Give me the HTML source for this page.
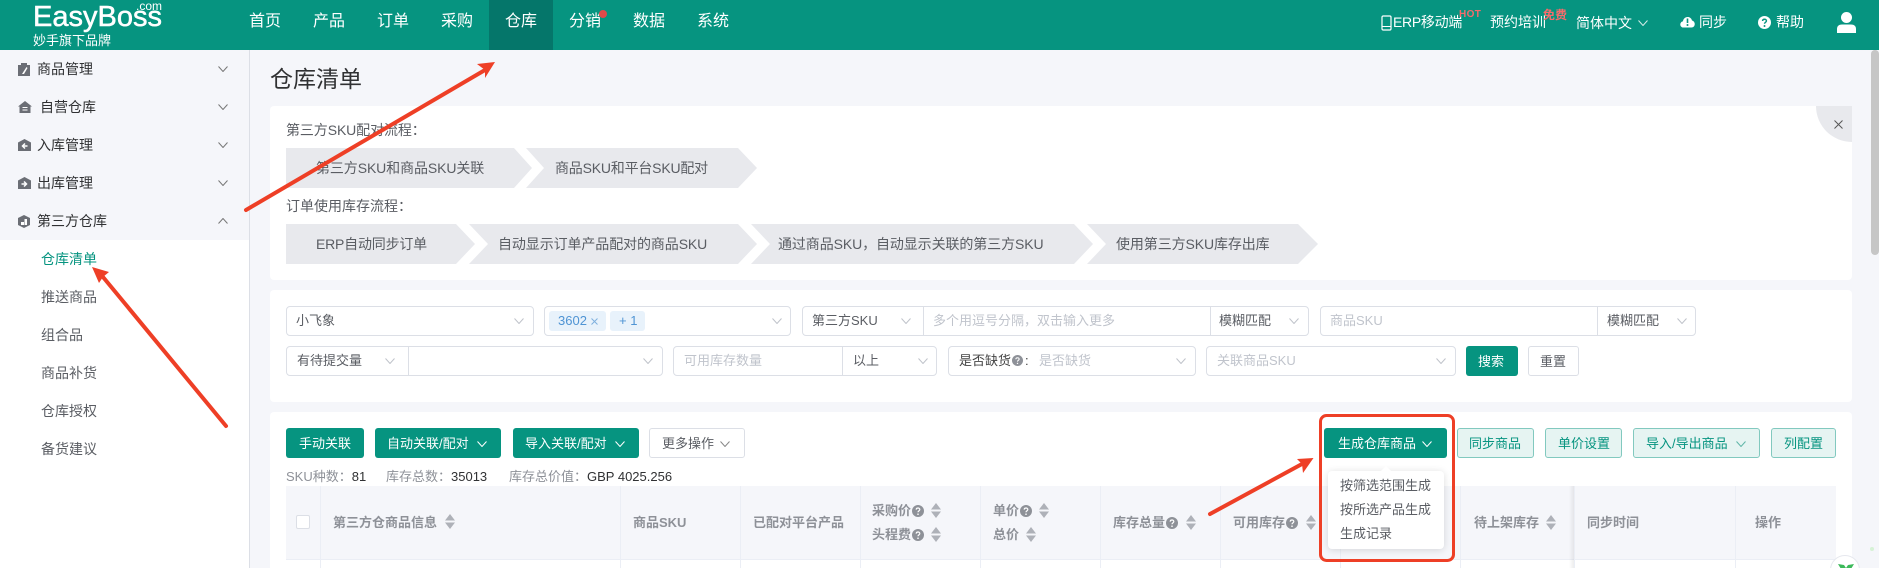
<!DOCTYPE html>
<html lang="zh-CN">
<head>
<meta charset="utf-8">
<title>仓库清单</title>
<style>
html,body{margin:0;padding:0;width:1879px;height:568px;overflow:hidden;background:#f5f6fa}
body{position:relative;font-family:"Liberation Sans","Noto Sans CJK SC",sans-serif;font-size:14px;color:#606266}
.a,.t,.b{position:absolute;box-sizing:border-box}
.t{white-space:nowrap;line-height:20px;height:20px}
.w{color:#fff}
.m{font-size:13px}
.card{background:#fff;border-radius:4px}
.box{border:1px solid #dcdfe6;border-radius:4px;background:#fff;height:30px}
.ph{color:#c0c4cc;font-size:13px}
.b{height:30px;border-radius:3px;top:428px}
.p{background:#069480}
.l{background:#e6f4f2;border:1px solid #82c9bf}
.g{color:#069480}
.h{font-weight:bold;font-size:13px;color:#8e9198}
.f{color:#5a5d63}
.s{font-size:13px;color:#8e9198}
.d{color:#303133}
svg{position:absolute;overflow:visible}
</style>
</head>
<body>
<svg width="0" height="0" style="position:absolute">
<defs>
<symbol id="chev" viewBox="0 0 10 6"><path d="M.5.5 5 5.5 9.5.5" fill="none" stroke="currentColor" stroke-width="1"/></symbol>
<symbol id="sort" viewBox="0 0 10 15"><path d="M5 0 10 6.500H0zM5 15 0 8.500h10z" fill="#aeb1b8"/></symbol>
<symbol id="help" viewBox="0 0 12 12"><circle cx="6" cy="6" r="6" fill="#8e9198"/><path d="M4.200 4.600C4.300 2.400 7.900 2.500 7.800 4.600 7.700 5.900 6 5.800 6 7.200" fill="none" stroke="#fff" stroke-width="1.200"/><circle cx="6" cy="9.200" r=".8" fill="#fff"/></symbol>
</defs>
</svg>

<!-- header -->
<div class="a" style="left:0;top:0;width:1879px;height:50px;background:#069480"></div>
<div class="a" style="left:489px;top:0;width:64px;height:50px;background:#05766a"></div>
<div class="t w" style="left:33px;top:0;font-size:29px;line-height:34px;height:34px;font-family:'Liberation Sans',sans-serif;-webkit-text-stroke:.5px #fff">EasyBoss</div>
<div class="t w" style="left:136px;top:-4px;font-size:12px">.com</div>
<div class="t w" style="left:33px;top:31px;font-size:13px">妙手旗下品牌</div>
<div class="t w" style="left:249px;top:12px;font-size:16px">首页</div>
<div class="t w" style="left:313px;top:12px;font-size:16px">产品</div>
<div class="t w" style="left:377px;top:12px;font-size:16px">订单</div>
<div class="t w" style="left:441px;top:12px;font-size:16px">采购</div>
<div class="t w" style="left:505px;top:12px;font-size:16px">仓库</div>
<div class="t w" style="left:569px;top:12px;font-size:16px">分销</div>
<div class="a" style="left:599px;top:10px;width:8px;height:8px;border-radius:50%;background:#e04a4a"></div>
<div class="t w" style="left:633px;top:12px;font-size:16px">数据</div>
<div class="t w" style="left:697px;top:12px;font-size:16px">系统</div>

<svg style="left:1381px;top:15px" width="11" height="16" viewBox="0 0 11 16"><rect x="1" y="1" width="9" height="14" rx="1.2" fill="none" stroke="#fff" stroke-width="1.2"/><path d="M1 11.500h9" stroke="#fff"/></svg>
<div class="t w" style="left:1393px;top:12px;font-size:14px;letter-spacing:-.3px">ERP移动端</div>
<div class="t" style="left:1459px;top:5px;font-size:10px;font-weight:bold;color:#f56c6c;letter-spacing:.4px">HOT</div>
<div class="t w" style="left:1490px;top:12px">预约培训</div>
<div class="t" style="left:1543px;top:5px;font-size:12px;font-weight:bold;color:#f56c6c">免费</div>
<div class="t w" style="left:1576px;top:13px">简体中文</div>
<svg style="left:1638px;top:20px;color:#d5ece8" width="10" height="6"><use href="#chev"/></svg>
<svg style="left:1680px;top:15px" width="15" height="13" viewBox="0 0 15 13"><path d="M3.500 12.500C-.5 12.500-.8 7 3 6.200 3.500 1.500 10.500 0 12 5.500 16 6.500 15.500 12.500 11.500 12.500Z" fill="#fff"/><path d="M7.500 3.500v4.500" stroke="#069480" stroke-width="1.600"/><circle cx="7.500" cy="10" r="1" fill="#069480"/></svg>
<div class="t w" style="left:1699px;top:12px">同步</div>
<svg style="left:1758px;top:16px" width="13" height="13" viewBox="0 0 12 12"><circle cx="6" cy="6" r="6" fill="#fff"/><path d="M4.200 4.600C4.300 2.400 7.900 2.500 7.800 4.600 7.700 5.900 6 5.800 6 7.200" fill="none" stroke="#069480" stroke-width="1.300"/><circle cx="6" cy="9.200" r=".9" fill="#069480"/></svg>
<div class="t w" style="left:1776px;top:12px">帮助</div>
<svg style="left:1837px;top:12px" width="19" height="21" viewBox="0 0 19 21"><circle cx="9.500" cy="5.500" r="5.500" fill="#fff"/><path d="M0 21V17C0 14 2 12.500 5 12.500H14C17 12.500 19 14 19 17V21Z" fill="#fff"/></svg>

<!-- sidebar -->
<div class="a" style="left:0;top:240px;width:249px;height:328px;background:#fff"></div>
<div class="a" style="left:249px;top:50px;width:1px;height:518px;background:#dcdfe6"></div>

<svg style="left:18px;top:63px" width="12" height="13" viewBox="0 0 12 13"><path d="M0 2H3V0H9V2H12V13H0Z" fill="#6b6e75"/><path d="M4 11 8.500 4 9.500 5 6 11Z" fill="#fff"/></svg>
<div class="t" style="left:37px;top:59px;color:#303133">商品管理</div>
<svg style="left:18px;top:101px" width="14" height="12" viewBox="0 0 14 12"><path d="M7 0 14 5.500H12.500V12H1.500V5.500H0Z" fill="#6b6e75"/><path d="M4.500 6.500h5M4.500 9h5" stroke="#fff" stroke-width="1"/></svg>
<div class="t" style="left:40px;top:97px;color:#303133">自营仓库</div>
<svg style="left:18px;top:139px" width="13" height="12" viewBox="0 0 13 12"><path d="M6.500 0 13 3.500V12H0V3.500Z" fill="#6b6e75"/><path d="M9.500 7H4.500M7 4.500 4.500 7 7 9.500" fill="none" stroke="#fff" stroke-width="1.500"/></svg>
<div class="t" style="left:37px;top:135px;color:#303133">入库管理</div>
<svg style="left:18px;top:177px" width="13" height="12" viewBox="0 0 13 12"><path d="M6.500 0 13 3.500V12H0V3.500Z" fill="#6b6e75"/><path d="M3.500 7H8.500M6 4.500 8.500 7 6 9.500" fill="none" stroke="#fff" stroke-width="1.500"/></svg>
<div class="t" style="left:37px;top:173px;color:#303133">出库管理</div>
<svg style="left:18px;top:215px" width="12" height="13" viewBox="0 0 12 13"><path d="M6 0 12 3V10L6 13 0 10V3Z" fill="#6b6e75"/><path d="M3 7H6V10H3ZM6.500 4H9V10H6.500Z" fill="#fff"/></svg>
<div class="t" style="left:37px;top:211px;color:#303133">第三方仓库</div>
<svg style="left:218px;top:66px;color:#777" width="10" height="6"><use href="#chev"/></svg>
<svg style="left:218px;top:104px;color:#777" width="10" height="6"><use href="#chev"/></svg>
<svg style="left:218px;top:142px;color:#777" width="10" height="6"><use href="#chev"/></svg>
<svg style="left:218px;top:180px;color:#777" width="10" height="6"><use href="#chev"/></svg>
<svg style="left:218px;top:218px;color:#777;transform:scaleY(-1)" width="10" height="6"><use href="#chev"/></svg>

<div class="t g" style="left:41px;top:249px">仓库清单</div>
<div class="t f" style="left:41px;top:287px">推送商品</div>
<div class="t f" style="left:41px;top:325px">组合品</div>
<div class="t f" style="left:41px;top:363px">商品补货</div>
<div class="t f" style="left:41px;top:401px">仓库授权</div>
<div class="t f" style="left:41px;top:439px">备货建议</div>

<!-- title -->
<div class="t" style="left:270px;top:64px;font-size:23px;line-height:30px;height:30px;color:#303133">仓库清单</div>

<!-- flow card -->
<div class="a card" style="left:270px;top:106px;width:1582px;height:174px"></div>
<div class="a" style="left:1816px;top:106px;width:36px;height:36px;background:#e8e9ed;border-bottom-left-radius:36px"></div>
<svg style="left:1834px;top:120px" width="9" height="9" viewBox="0 0 9 9"><path d="M.5.5 8.500 8.500M8.500.5.500 8.500" stroke="#555" stroke-width="1"/></svg>
<div class="t f" style="left:286px;top:120px;letter-spacing:-.1px">第三方SKU配对流程：</div>
<div class="t f" style="left:286px;top:196px">订单使用库存流程：</div>
<svg style="left:0;top:0" width="1879" height="568"><g fill="#e8e9ed">
<polygon points="286,148 514,148 532,168 514,188 286,188"/>
<polygon points="526,148 738,148 757,168 738,188 526,188 544,168"/>
<polygon points="286,224 456,224 475,244 456,264 286,264"/>
<polygon points="469,224 738,224 757,244 738,264 469,264 488,244"/>
<polygon points="751,224 1074,224 1093,244 1074,264 751,264 770,244"/>
<polygon points="1087,224 1298,224 1318,244 1298,264 1087,264 1106,244"/>
</g></svg>
<div class="t f" style="left:316px;top:158px;letter-spacing:-.1px">第三方SKU和商品SKU关联</div>
<div class="t f" style="left:555px;top:158px;letter-spacing:-.2px">商品SKU和平台SKU配对</div>
<div class="t f" style="left:316px;top:234px;letter-spacing:-.2px">ERP自动同步订单</div>
<div class="t f" style="left:498px;top:234px;letter-spacing:-.1px">自动显示订单产品配对的商品SKU</div>
<div class="t f" style="left:778px;top:234px;letter-spacing:-.1px">通过商品SKU，自动显示关联的第三方SKU</div>
<div class="t f" style="left:1116px;top:234px;letter-spacing:-.1px">使用第三方SKU库存出库</div>

<!-- filter card -->
<div class="a card" style="left:270px;top:290px;width:1582px;height:112px"></div>
<div class="a box" style="left:286px;top:306px;width:248px"></div>
<div class="a box" style="left:544px;top:306px;width:247px"></div>
<div class="a box" style="left:802px;top:306px;width:507px"></div>
<div class="a" style="left:923px;top:306px;width:1px;height:30px;background:#dcdfe6"></div>
<div class="a" style="left:1210px;top:306px;width:1px;height:30px;background:#dcdfe6"></div>
<div class="a box" style="left:1320px;top:306px;width:376px"></div>
<div class="a" style="left:1597px;top:306px;width:1px;height:30px;background:#dcdfe6"></div>
<div class="a box" style="left:286px;top:346px;width:377px"></div>
<div class="a" style="left:408px;top:346px;width:1px;height:30px;background:#dcdfe6"></div>
<div class="a box" style="left:673px;top:346px;width:264px"></div>
<div class="a" style="left:842px;top:346px;width:1px;height:30px;background:#dcdfe6"></div>
<div class="a box" style="left:948px;top:346px;width:248px"></div>
<div class="a box" style="left:1206px;top:346px;width:250px"></div>

<div class="t f m" style="left:296px;top:311px">小飞象</div>
<div class="a" style="left:549px;top:311px;width:57px;height:20px;background:#e8f2fb;border-radius:3px"></div>
<div class="t m" style="left:558px;top:311px;color:#4f94d4">3602</div>
<svg style="left:591px;top:318px" width="7" height="7" viewBox="0 0 7 7"><path d="M.5.5 6.500 6.500M6.500.5.500 6.500" stroke="#7fb0de" stroke-width="1"/></svg>
<div class="a" style="left:610px;top:311px;width:35px;height:20px;background:#e8f2fb;border-radius:3px"></div>
<div class="t m" style="left:619px;top:311px;color:#4f94d4">+ 1</div>
<div class="t f m" style="left:812px;top:311px">第三方SKU</div>
<div class="t ph" style="left:933px;top:311px">多个用逗号分隔，双击输入更多</div>
<div class="t f m" style="left:1219px;top:311px">模糊匹配</div>
<div class="t ph" style="left:1330px;top:311px">商品SKU</div>
<div class="t f m" style="left:1607px;top:311px">模糊匹配</div>
<div class="t f m" style="left:297px;top:351px">有待提交量</div>
<div class="t ph" style="left:684px;top:351px">可用库存数量</div>
<div class="t f m" style="left:853px;top:351px">以上</div>
<div class="t m" style="left:959px;top:351px;color:#444">是否缺货</div>
<svg style="left:1012px;top:355px" width="11" height="11"><use href="#help"/></svg>
<div class="t m" style="left:1025px;top:351px;color:#444">:</div>
<div class="t ph" style="left:1039px;top:351px">是否缺货</div>
<div class="t ph" style="left:1217px;top:351px">关联商品SKU</div>

<svg style="left:514px;top:318px;color:#bfc3ca" width="10" height="6"><use href="#chev"/></svg>
<svg style="left:772px;top:318px;color:#bfc3ca" width="10" height="6"><use href="#chev"/></svg>
<svg style="left:901px;top:318px;color:#bfc3ca" width="10" height="6"><use href="#chev"/></svg>
<svg style="left:1289px;top:318px;color:#bfc3ca" width="10" height="6"><use href="#chev"/></svg>
<svg style="left:1677px;top:318px;color:#bfc3ca" width="10" height="6"><use href="#chev"/></svg>
<svg style="left:385px;top:358px;color:#bfc3ca" width="10" height="6"><use href="#chev"/></svg>
<svg style="left:643px;top:358px;color:#bfc3ca" width="10" height="6"><use href="#chev"/></svg>
<svg style="left:918px;top:358px;color:#bfc3ca" width="10" height="6"><use href="#chev"/></svg>
<svg style="left:1176px;top:358px;color:#bfc3ca" width="10" height="6"><use href="#chev"/></svg>
<svg style="left:1436px;top:358px;color:#bfc3ca" width="10" height="6"><use href="#chev"/></svg>

<div class="b p" style="left:1466px;top:346px;width:52px"></div>
<div class="t w m" style="left:1478px;top:352px">搜索</div>
<div class="b" style="left:1528px;top:346px;width:51px;border:1px solid #dcdfe6;background:#fff"></div>
<div class="t f m" style="left:1540px;top:352px">重置</div>

<!-- list card -->
<div class="a card" style="left:270px;top:412px;width:1582px;height:160px"></div>
<div class="b p" style="left:286px;width:78px"></div>
<div class="t w m" style="left:299px;top:434px">手动关联</div>
<div class="b p" style="left:375px;width:126px"></div>
<div class="t w m" style="left:387px;top:434px">自动关联/配对</div>
<svg style="left:477px;top:441px;color:#fff" width="10" height="6"><use href="#chev"/></svg>
<div class="b p" style="left:513px;width:126px"></div>
<div class="t w m" style="left:525px;top:434px">导入关联/配对</div>
<svg style="left:615px;top:441px;color:#fff" width="10" height="6"><use href="#chev"/></svg>
<div class="b" style="left:649px;width:96px;border:1px solid #dcdfe6;background:#fff"></div>
<div class="t f m" style="left:662px;top:434px">更多操作</div>
<svg style="left:720px;top:441px;color:#888" width="10" height="6"><use href="#chev"/></svg>

<div class="b p" style="left:1324px;width:123px"></div>
<div class="t w m" style="left:1338px;top:434px">生成仓库商品</div>
<svg style="left:1422px;top:441px;color:#fff" width="10" height="6"><use href="#chev"/></svg>
<div class="b l" style="left:1457px;width:77px"></div>
<div class="t g m" style="left:1469px;top:434px">同步商品</div>
<div class="b l" style="left:1545px;width:77px"></div>
<div class="t g m" style="left:1558px;top:434px">单价设置</div>
<div class="b l" style="left:1633px;width:127px"></div>
<div class="t g m" style="left:1646px;top:434px">导入/导出商品</div>
<svg style="left:1736px;top:441px;color:#5fb5a8" width="10" height="6"><use href="#chev"/></svg>
<div class="b l" style="left:1771px;width:65px"></div>
<div class="t g m" style="left:1784px;top:434px">列配置</div>

<div class="t s" style="left:286px;top:467px">SKU种数：<span class="d">81</span></div>
<div class="t s" style="left:386px;top:467px">库存总数：<span class="d">35013</span></div>
<div class="t s" style="left:509px;top:467px">库存总价值：<span class="d">GBP 4025.256</span></div>

<!-- table -->
<div class="a" style="left:286px;top:486px;width:1550px;height:74px;background:#f5f6fa;border-bottom:1px solid #ebeef5"></div>
<svg style="left:0;top:0" width="1879" height="568"><g stroke="#ebeef5" stroke-width="1">
<path d="M320.500 486V568M620.500 486V568M740.500 486V568M860.500 486V568M980.500 486V568M1100.500 486V568M1220.500 486V568M1340.500 486V568M1460.500 486V568M1574.500 486V568M1735.500 486V568"/>
</g></svg>
<div class="a" style="left:1569px;top:486px;width:5px;height:82px;background:linear-gradient(to right,rgba(0,0,0,0),rgba(0,0,0,.07))"></div>
<div class="a" style="left:296px;top:515px;width:14px;height:14px;background:#fff;border:1px solid #dcdfe6;border-radius:2px"></div>

<div class="t h" style="left:333px;top:513px">第三方仓商品信息</div>
<svg style="left:445px;top:514px" width="10" height="15"><use href="#sort"/></svg>
<div class="t h" style="left:633px;top:513px">商品SKU</div>
<div class="t h" style="left:753px;top:513px">已配对平台产品</div>
<div class="t h" style="left:872px;top:501px">采购价</div>
<svg style="left:912px;top:505px" width="12" height="12"><use href="#help"/></svg>
<svg style="left:931px;top:503px" width="10" height="15"><use href="#sort"/></svg>
<div class="t h" style="left:872px;top:525px">头程费</div>
<svg style="left:912px;top:529px" width="12" height="12"><use href="#help"/></svg>
<svg style="left:931px;top:527px" width="10" height="15"><use href="#sort"/></svg>
<div class="t h" style="left:993px;top:501px">单价</div>
<svg style="left:1020px;top:505px" width="12" height="12"><use href="#help"/></svg>
<svg style="left:1039px;top:503px" width="10" height="15"><use href="#sort"/></svg>
<div class="t h" style="left:993px;top:525px">总价</div>
<svg style="left:1026px;top:527px" width="10" height="15"><use href="#sort"/></svg>
<div class="t h" style="left:1113px;top:513px">库存总量</div>
<svg style="left:1166px;top:517px" width="12" height="12"><use href="#help"/></svg>
<svg style="left:1186px;top:515px" width="10" height="15"><use href="#sort"/></svg>
<div class="t h" style="left:1233px;top:513px">可用库存</div>
<svg style="left:1286px;top:517px" width="12" height="12"><use href="#help"/></svg>
<svg style="left:1306px;top:515px" width="10" height="15"><use href="#sort"/></svg>
<div class="t h" style="left:1474px;top:513px">待上架库存</div>
<svg style="left:1546px;top:515px" width="10" height="15"><use href="#sort"/></svg>
<div class="t h" style="left:1587px;top:513px">同步时间</div>
<div class="t h" style="left:1755px;top:513px">操作</div>

<!-- dropdown -->
<div class="a" style="left:1328px;top:471px;width:116px;height:78px;background:#fff;border-radius:4px;box-shadow:0 1px 8px rgba(0,0,0,.14)"></div>
<div class="a" style="left:1381px;top:466px;width:0;height:0;border-left:5px solid transparent;border-right:5px solid transparent;border-bottom:5px solid #fff"></div>
<div class="t f m" style="left:1340px;top:476px">按筛选范围生成</div>
<div class="t f m" style="left:1340px;top:500px">按所选产品生成</div>
<div class="t f m" style="left:1340px;top:524px">生成记录</div>

<!-- floating -->
<div class="a" style="left:1830px;top:555px;width:30px;height:30px;border-radius:50%;background:#fff;border:1px solid #e6e8ee"></div>
<svg style="left:1838px;top:564px" width="16" height="5" viewBox="0 0 16 5"><path d="M0 0 6 1 8 4 10 1 16 0 13 5H3Z" fill="#3cb95a"/></svg>
<div class="a" style="left:1870px;top:547px;width:4px;height:4px;border-radius:50%;background:#d6f2d6"></div>

<!-- scrollbar -->
<div class="a" style="left:1871px;top:50px;width:8px;height:205px;border-radius:4px;background:#c6c6c6"></div>

<!-- annotations -->
<svg style="left:0;top:0" width="1879" height="568">
<g fill="none" stroke="#ee3f26" stroke-width="4" stroke-linecap="round">
<path d="M246 210 485 70"/>
<path d="M226 426 103 277"/>
<path d="M1210 514 1302 464"/>
</g>
<g fill="#ee3f26">
<polygon points="495,62 477,64 485,70 485,78"/>
<polygon points="92,267 109,272 103,277 99,283"/>
<polygon points="1313.500,458 1297,459 1302,464 1303,473"/>
</g>
<rect x="1320.500" y="415.500" width="133" height="145" rx="6" fill="none" stroke="#ee3f26" stroke-width="3"/>
</svg>
</body>
</html>
